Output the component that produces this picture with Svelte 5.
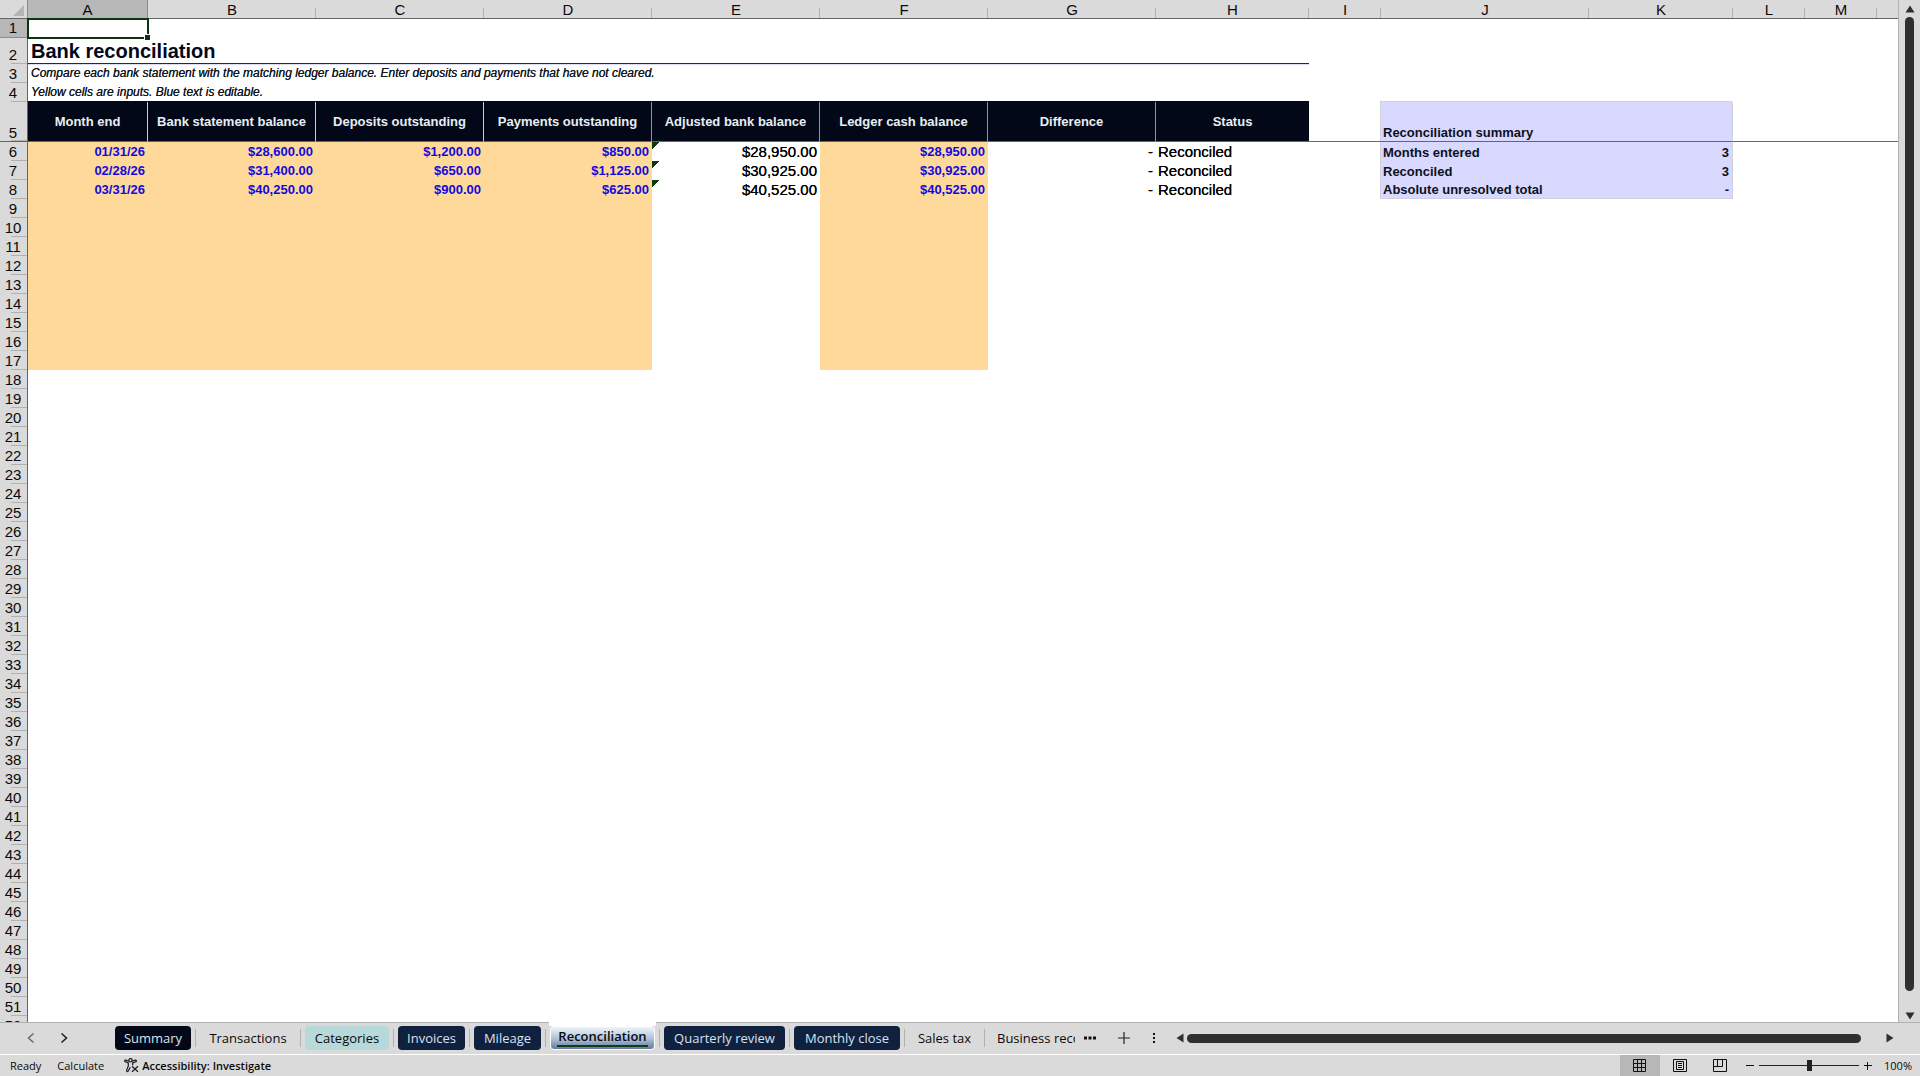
<script lang="ts">
	type Cell = { text?: string; kind?: string; span?: number; flag?: boolean };

	const columns = [
		{ name: 'A', width: 120 },
		{ name: 'B', width: 168 },
		{ name: 'C', width: 168 },
		{ name: 'D', width: 168 },
		{ name: 'E', width: 168 },
		{ name: 'F', width: 168 },
		{ name: 'G', width: 168 },
		{ name: 'H', width: 153 },
		{ name: 'I', width: 72 },
		{ name: 'J', width: 208 },
		{ name: 'K', width: 144 },
		{ name: 'L', width: 72 },
		{ name: 'M', width: 72 },
	];

	const headings = [
		'Month end',
		'Bank statement balance',
		'Deposits outstanding',
		'Payments outstanding',
		'Adjusted bank balance',
		'Ledger cash balance',
		'Difference',
		'Status',
	];

	const months = [
		['01/31/26', '$28,600.00', '$1,200.00', '$850.00', '$28,950.00', '$28,950.00'],
		['02/28/26', '$31,400.00', '$650.00', '$1,125.00', '$30,925.00', '$30,925.00'],
		['03/31/26', '$40,250.00', '$900.00', '$625.00', '$40,525.00', '$40,525.00'],
	];

	const summary = [
		['Months entered', '3'],
		['Reconciled', '3'],
		['Absolute unresolved total', '-'],
	];

	const tabs = [
		{ name: 'Summary', width: 76, kind: 'black' },
		{ name: 'Transactions', width: 96, kind: 'plain' },
		{ name: 'Categories', width: 84, kind: 'teal' },
		{ name: 'Invoices', width: 67, kind: 'navy' },
		{ name: 'Mileage', width: 67, kind: 'navy' },
		{ name: 'Reconciliation', width: 105, kind: 'active' },
		{ name: 'Quarterly review', width: 121, kind: 'navy' },
		{ name: 'Monthly close', width: 106, kind: 'navy' },
		{ name: 'Sales tax', width: 71, kind: 'plain' },
		{ name: 'Business records', width: 86, kind: 'clipped' },
	];

	function rowCells(row: number): Cell[] {
		if (row === 2) return [{ text: 'Bank reconciliation', kind: 'title', span: 8 }, { span: 6 }];
		if (row === 3)
			return [
				{
					text: 'Compare each bank statement with the matching ledger balance. Enter deposits and payments that have not cleared.',
					kind: 'note',
					span: 14,
				},
			];
		if (row === 4)
			return [{ text: 'Yellow cells are inputs. Blue text is editable.', kind: 'note', span: 14 }];
		if (row === 5)
			return [
				...headings.map((text) => ({ text, kind: 'heading' })),
				{},
				{ text: 'Reconciliation summary', kind: 'summary summary--first', span: 2 },
				{ span: 3 },
			];
		if (row >= 6 && row <= 17) {
			const month = months[row - 6];
			const cells: Cell[] = [0, 1, 2, 3, 4, 5].map((i) => ({
				text: month?.[i],
				kind: i === 4 ? 'amount' : 'input',
				flag: i === 4 && !!month,
			}));
			cells.push({ text: month && '-', kind: 'amount' });
			cells.push({ text: month && 'Reconciled', kind: 'status' });
			cells.push({});
			const line = summary[row - 6];
			if (line) {
				const last = row === 8 ? ' summary--last' : '';
				cells.push({ text: line[0], kind: 'summary summary--left' + last });
				cells.push({ text: line[1], kind: 'summary summary--value' + last });
				cells.push({ span: 3 });
			} else {
				cells.push({ span: 5 });
			}
			return cells;
		}
		if (row === 1) return [{ kind: 'selected' }, { span: 13 }];
		return [{ span: 14 }];
	}

	const rows = Array.from({ length: 52 }, (_, i) => ({ number: i + 1, cells: rowCells(i + 1) }));

	let activeTab = $state('Reconciliation');
	let zoom = $state(100);
</script>

<div class="workbook">
	<div class="sheet_area">
		<div class="sheet">
			<table class="grid">
				<colgroup>
					<col style:width="28px" />
					{#each columns as column (column.name)}
						<col style:width="{column.width}px" />
					{/each}
					<col />
				</colgroup>
				<thead>
					<tr>
						<th class="corner" aria-label="Select all">
							<svg width="11" height="11" viewBox="0 0 11 11"><path d="M11 0V11H0Z" fill="#b4b4b4" /></svg>
						</th>
						{#each columns as column (column.name)}
							<th class="column_name" class:column_name--on={column.name === 'A'} scope="col">{column.name}</th>
						{/each}
						<th class="column_rest"></th>
					</tr>
				</thead>
				<tbody>
					{#each rows as row (row.number)}
						<tr class="row row--{row.number}">
							<th class="row_name" class:row_name--on={row.number === 1} scope="row">{row.number}</th>
							{#each row.cells as cell}
								<td class="cell {cell.kind ?? ''}" class:flagged={cell.flag} colspan={cell.span ?? 1}
									>{cell.text ?? ''}</td
								>
							{/each}
						</tr>
					{/each}
				</tbody>
			</table>
		</div>
		<div class="scroll_y">
			<button class="scroll_button" aria-label="Scroll up">
				<svg width="10" height="8" viewBox="0 0 10 8"><path d="M5 0.5L9.5 7.5H0.5Z" /></svg>
			</button>
			<div class="thumb_y"></div>
			<button class="scroll_button" aria-label="Scroll down">
				<svg width="10" height="8" viewBox="0 0 10 8"><path d="M0.5 0.5H9.5L5 7.5Z" /></svg>
			</button>
		</div>
	</div>

	<div class="tab_bar">
		<div class="tab_arrows">
			<button class="icon_button" aria-label="Previous sheet">
				<svg width="8" height="12" viewBox="0 0 8 12"><path d="M6.5 1.5L1.5 6L6.5 10.5" fill="none" stroke="#666" stroke-width="1.4" /></svg>
			</button>
			<button class="icon_button" aria-label="Next sheet">
				<svg width="8" height="12" viewBox="0 0 8 12"><path d="M1.5 1.5L6.5 6L1.5 10.5" fill="none" stroke="#222" stroke-width="1.6" /></svg>
			</button>
		</div>
		<div class="tabs">
			{#each tabs as tab, index (tab.name)}
				{#if index > 0}<span class="divider"></span>{/if}
				<button
					class="tab tab--{tab.kind}"
					style:width="{tab.width}px"
					aria-pressed={activeTab === tab.name}
					onclick={() => (activeTab = tab.name)}><span class="tab_label">{tab.name}</span></button
				>
			{/each}
		</div>
		<div class="tab_tools">
			<button class="icon_button" aria-label="More sheets">
				<svg width="12" height="4" viewBox="0 0 12 4"><path d="M0 0.5h3v3h-3zM4.5 0.5h3v3h-3zM9 0.5h3v3h-3z" fill="#111" /></svg>
			</button>
			<button class="icon_button" aria-label="New sheet">
				<svg width="12" height="12" viewBox="0 0 12 12"><path d="M6 0V12M0 6H12" stroke="#222" stroke-width="1.2" /></svg>
			</button>
			<button class="icon_button" aria-label="Resize tab bar">
				<svg width="4" height="12" viewBox="0 0 4 12"><path d="M1 1h2v2h-2zM1 5h2v2h-2zM1 9h2v2h-2z" fill="#111" /></svg>
			</button>
		</div>
		<div class="scroll_x">
			<button class="scroll_button" aria-label="Scroll left">
				<svg width="8" height="10" viewBox="0 0 8 10"><path d="M7.5 0.5V9.5L0.5 5Z" /></svg>
			</button>
			<div class="thumb_x"></div>
			<button class="scroll_button" aria-label="Scroll right">
				<svg width="8" height="10" viewBox="0 0 8 10"><path d="M0.5 0.5V9.5L7.5 5Z" /></svg>
			</button>
		</div>
	</div>

	<div class="status_bar">
		<span class="status_text">Ready</span>
		<span class="status_text">Calculate</span>
		<button class="accessibility">
			<svg width="15" height="15" viewBox="0 0 15 15" fill="none" stroke="#1a1a1a" stroke-width="1.2">
				<circle cx="6.5" cy="2.3" r="1.7" />
				<path d="M4.8 3.2L1.8 2.2C0.6 1.9 0.3 3.4 1.3 3.8L4.3 5V8L2.6 12.4C2.3 13.6 3.8 14 4.2 13L6.4 9.2M8.2 3.2L11.2 2.2C12.4 1.9 12.8 3.4 11.8 3.8L8.7 5V7.2" />
				<path d="M8 8.2L14 13.8M14 8.2L8 13.8" />
			</svg>
			<span>Accessibility: Investigate</span>
		</button>
		<div class="views">
			<button class="view view--on" aria-label="Normal view">
				<svg width="14" height="13" viewBox="0 0 14 13" fill="none" stroke="#111"><path d="M0.5 0.5H12.5V12.5H0.5ZM4.5 0V13M8.5 0V13M0 4.5H13M0 8.5H13" /></svg>
			</button>
			<button class="view" aria-label="Page layout view">
				<svg width="14" height="13" viewBox="0 0 14 13" fill="none" stroke="#111"><path d="M0.5 0.5H13.5V12.5H0.5ZM3.5 2.5H10.5V10.5H3.5ZM5 4.5H9M5 6.5H9M5 8.5H9" /></svg>
			</button>
			<button class="view" aria-label="Page break preview">
				<svg width="14" height="13" viewBox="0 0 14 13" fill="none" stroke="#111"><path d="M0.5 0.5H13.5V12.5H0.5ZM4.5 0V7.5M0 7.5H9.5V0" /></svg>
			</button>
		</div>
		<button class="zoom_button" aria-label="Zoom out" onclick={() => (zoom = Math.max(10, zoom - 10))}>
			<svg width="8" height="8" viewBox="0 0 8 8"><path d="M0 3.5H8" stroke="#111" /></svg>
		</button>
		<input class="zoom_slider" type="range" min="10" max="190" aria-label="Zoom" bind:value={zoom} />
		<button class="zoom_button" aria-label="Zoom in" onclick={() => (zoom = Math.min(190, zoom + 10))}>
			<svg width="8" height="8" viewBox="0 0 8 8"><path d="M0 3.5H8M3.5 0V8" stroke="#111" /></svg>
		</button>
		<span class="zoom_value">{zoom}%</span>
	</div>
</div>

<style>
	:global(body) {
		margin: 0;
	}

	.workbook {
		display: flex;
		flex-direction: column;
		height: 100vh;
		overflow: hidden;
		background: #dadada;
		color: #0a0a0a;
		font-family: 'Open Sans', 'Noto Sans', sans-serif;
	}

	button {
		margin: 0;
		padding: 0;
		border: 0;
		background: none;
		color: inherit;
		font: inherit;
	}

	svg {
		display: block;
	}

	.sheet_area {
		display: flex;
		flex: 1;
		min-height: 0;
	}

	.sheet {
		flex: 1;
		min-width: 0;
		overflow: hidden;
		border-right: 1px solid #b1b1b1;
		background: #fff;
	}

	.grid {
		width: 100%;
		table-layout: fixed;
		border-collapse: separate;
		border-spacing: 0;
		font-family: 'Liberation Sans', Arial, sans-serif;
		font-size: 15px;
	}

	th,
	td {
		box-sizing: border-box;
		padding: 0;
		font-weight: 400;
		line-height: 18px;
		white-space: nowrap;
	}

	thead th {
		height: 19px;
		padding-top: 2px;
		border-bottom: 1px solid #656565;
		background: #dadada;
		line-height: 16px;
	}

	.column_name {
		background: linear-gradient(#b1b1b1, #b1b1b1) right bottom / 1px 10px no-repeat #dadada;
	}

	.column_name--on {
		border-right: 1px solid #8a8a8a;
		background: #b7b7b7;
	}

	.corner {
		padding-left: 13px;
		border-right: 1px solid #8a8a8a;
	}

	.row {
		height: 19px;
	}

	.row--2 {
		height: 26px;
	}

	.row--5 {
		height: 40px;
	}

	.row_name {
		padding-right: 1px;
		border-right: 1px solid #656565;
		background: linear-gradient(#b1b1b1, #b1b1b1) right bottom / 16px 1px no-repeat #dadada;
		text-align: center;
		vertical-align: bottom;
	}

	.row_name--on {
		background: #b7b7b7;
		border-bottom: 1px solid #8a8a8a;
	}

	.row--5 .row_name,
	.row--5 .cell {
		border-bottom: 1px solid #656565;
		line-height: 16px;
	}

	.cell {
		padding: 0 3px;
		vertical-align: bottom;
	}

	.selected {
		position: relative;
		outline: 2px solid #0b3314;
		outline-offset: -1px;
	}

	/* fill handle over the corner of the selected cell */
	.selected::after {
		content: '';
		position: absolute;
		right: -2px;
		bottom: -2px;
		width: 5px;
		height: 5px;
		border: solid #fff;
		border-width: 1px 0 0 1px;
		background: #0b3314;
	}

	.title {
		border-bottom: 1px solid #14296b;
		box-shadow: 0 1px #dcdcf5;
		color: #020817;
		font-size: 20px;
		font-weight: 700;
		line-height: 24px;
	}

	.note {
		padding-bottom: 1px;
		color: #0f1722;
		font-size: 12px;
		font-style: italic;
		text-shadow: 0 0 #1c2430;
	}

	.heading {
		border-right: 1px solid #8d93a0;
		background: #020817;
		box-shadow: 0 -1px #020817;
		color: #e8eef2;
		font-size: 13px;
		font-weight: 700;
		text-align: center;
		vertical-align: middle;
	}

	.heading:nth-child(-n + 4) {
		border-right-color: #c9ccd4;
	}

	.heading:nth-child(9) {
		border-right: 0;
	}

	.input {
		background: #ffd999;
		color: #1409e0;
		font-size: 13px;
		font-weight: 700;
		text-align: right;
	}

	.amount {
		text-align: right;
	}

	.amount,
	.status {
		color: #000;
		text-shadow: 0 0 #000;
	}

	.status {
		padding-left: 2px;
	}

	.flagged {
		background: linear-gradient(135deg, #0b3d0b 5px, transparent 5px) no-repeat;
	}

	.summary {
		padding-left: 2px;
		background: #d9d9ff;
		color: #0d1020;
		font-size: 13px;
		font-weight: 700;
		line-height: 16px;
	}

	.summary--first {
		border-right: 1px solid #d0d0dc;
		box-shadow: -1px -1px #d0d0dc;
	}

	.summary--left {
		box-shadow: -1px 0 #d0d0dc;
	}

	.summary--value {
		border-right: 1px solid #d0d0dc;
		text-align: right;
	}

	.summary--last {
		border-bottom: 1px solid #d0d0dc;
	}

	.scroll_y {
		display: flex;
		flex-direction: column;
		align-items: center;
		width: 21px;
		padding: 5px 0 2px;
		box-sizing: border-box;
	}

	.thumb_y {
		flex: 1;
		width: 9px;
		margin: 4px 0 21px;
		border-radius: 5px;
		background: #2f2f2f;
	}

	.scroll_button {
		fill: #2f2f2f;
	}

	.tab_bar {
		display: flex;
		align-items: center;
		height: 30px;
		padding-bottom: 1px;
		border-top: 1px solid #b1b1b1;
		border-bottom: 1px solid #fff;
		font-size: 13px;
	}

	.tab_arrows {
		display: flex;
		gap: 25px;
		width: 88px;
		padding-left: 27px;
	}

	.tabs {
		display: flex;
		align-items: center;
		gap: 4px;
	}

	.divider {
		width: 1px;
		height: 18px;
		background: #b1b1b1;
	}

	.tab {
		height: 24px;
		border-radius: 4px;
		line-height: 24px;
		white-space: nowrap;
	}

	.tab--black {
		background: #020817;
		color: #dbe3f0;
	}

	.tab--teal {
		background: #b7d9da;
	}

	.tab--navy {
		background: #10213f;
		color: #d5e3f2;
	}

	.tab--clipped {
		overflow: hidden;
		padding-left: 8px;
		text-align: left;
	}

	.tab--active {
		position: relative;
		border: 1px solid #fff;
		background: linear-gradient(#eef4f8, #b3c6dc 50%, #64799c);
		font-weight: 600;
		line-height: 18px;
	}

	/* joins the active tab to the sheet above the bar */
	.tab--active::before {
		content: '';
		position: absolute;
		top: -5px;
		right: -2px;
		left: -2px;
		height: 4px;
		background: #fff;
	}

	.tab--active .tab_label {
		display: block;
		margin: 0 6px 2px;
		border-bottom: 2px solid #0b3d1a;
	}

	.tab_tools {
		display: flex;
		align-items: center;
		gap: 22px;
		padding: 0 20px 0 9px;
	}

	.scroll_x {
		display: flex;
		flex: 1;
		align-items: center;
		padding-right: 26px;
	}

	.thumb_x {
		flex: 1;
		height: 9px;
		margin: 0 25px 0 3px;
		border-radius: 5px;
		background: #2f2f2f;
	}

	.status_bar {
		display: flex;
		align-items: center;
		height: 21px;
		padding: 0 8px 0 10px;
		font-size: 11px;
	}

	.status_text {
		margin-right: 16px;
	}

	.accessibility {
		display: flex;
		align-items: center;
		gap: 3px;
		margin-left: 4px;
		font-weight: 600;
	}

	.views {
		display: flex;
		align-self: stretch;
		margin-left: auto;
	}

	.view {
		display: grid;
		width: 40px;
		place-items: center;
	}

	.view--on {
		background: #b7b7b7;
	}

	.zoom_button {
		display: grid;
		width: 16px;
		place-items: center;
	}

	.views + .zoom_button {
		margin-left: 2px;
	}

	.zoom_slider {
		width: 100px;
		height: 12px;
		margin: 0 1px;
		background: linear-gradient(#222, #222) center / 100% 1px no-repeat;
		appearance: none;
	}

	.zoom_slider::-webkit-slider-thumb {
		width: 5px;
		height: 11px;
		background: #222;
		appearance: none;
	}

	.zoom_value {
		width: 36px;
		text-align: right;
	}
</style>
